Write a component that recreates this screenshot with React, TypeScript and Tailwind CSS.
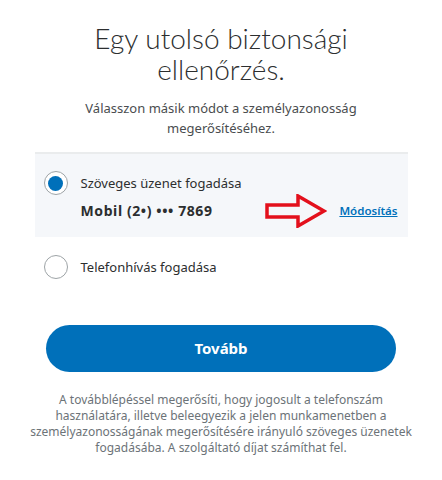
import React, { useState } from "react";

const font = { fontFamily: '"Noto Sans", "Open Sans", sans-serif' };

const Radio = ({ checked }: { checked: boolean }) => (
  <span className="flex h-[24px] w-[24px] shrink-0 items-center justify-center rounded-full border border-[#9da3a6] bg-white">
    {checked && <span className="h-[15px] w-[15px] rounded-full bg-[#0070ba]" />}
  </span>
);

const Arrow = () => (
  <svg width="62" height="34" viewBox="0 0 62 34" className="-my-[7px] shrink-0">
    <path
      d="M2 11 H33 V2 L59 17 L33 32 V23 H2 Z"
      fill="none"
      stroke="#e3101c"
      strokeWidth="3.5"
      strokeLinejoin="miter"
    />
  </svg>
);

export default function App() {
  const [method, setMethod] = useState<"sms" | "call">("sms");

  return (
    <div className="flex h-[480px] w-[442px] flex-col items-center bg-white" style={font}>
      <h1
        className="mt-[23px] text-center text-[28px] font-light leading-[31px] text-[#2c2e2f]"
        style={{ fontFamily: 'Lato, "Noto Sans", sans-serif' }}
      >
        Egy utolsó biztonsági
        <br />
        ellenőrzés.
      </h1>
      <p className="mt-[13px] text-center text-[13px] leading-[20px] text-[#4a4d4f]">
        Válasszon másik módot a személyazonosság
        <br />
        megerősítéséhez.
      </p>

      <div className="mt-[14px] w-[373px]">
        <div
          className={`border-t-2 border-[#eaeced] pb-[16px] pl-[9px] pr-[10px] pt-[17px] ${
            method === "sms" ? "bg-[#f5f7fa]" : "bg-white"
          }`}
        >
          <label className="flex cursor-pointer items-center gap-[13px]" onClick={() => setMethod("sms")}>
            <Radio checked={method === "sms"} />
            <span className="text-[13px] leading-[20px] text-[#2c2e2f]">Szöveges üzenet fogadása</span>
          </label>
          <div className="mt-[6px] flex items-center pl-[37px]">
            <span className="text-[14px] font-bold leading-[20px] tracking-[0.6px] text-[#2c2e2f]">
              Mobil (2•) ••• 7869
            </span>
            <span className="ml-auto flex items-center gap-[12px]">
              <Arrow />
              <a href="#" className="text-[11.5px] font-semibold leading-[20px] text-[#0070ba] underline">
                Módosítás
              </a>
            </span>
          </div>
        </div>

        <label
          className="mt-[18px] flex cursor-pointer items-center gap-[13px] pl-[9px]"
          onClick={() => setMethod("call")}
        >
          <Radio checked={method === "call"} />
          <span className="text-[13px] leading-[20px] text-[#2c2e2f]">Telefonhívás fogadása</span>
        </label>
      </div>

      <button className="mt-[46px] h-[47px] w-[350px] rounded-full bg-[#0070ba] text-[15px] font-bold text-white">
        Tovább
      </button>

      <p className="mt-[20px] text-center text-[12px] leading-[16px] text-[#6c7378]">
        A továbblépéssel megerősíti, hogy jogosult a telefonszám
        <br />
        használatára, illetve beleegyezik a jelen munkamenetben a
        <br />
        személyazonosságának megerősítésére irányuló szöveges üzenetek
        <br />
        fogadásába. A szolgáltató díjat számíthat fel.
      </p>
    </div>
  );
}
